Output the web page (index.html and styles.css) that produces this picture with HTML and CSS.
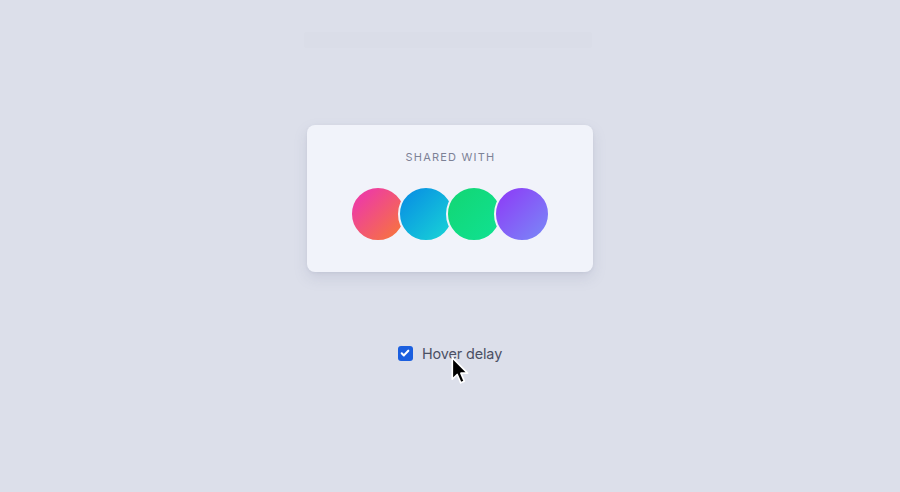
FILE: index.html
```html
<!DOCTYPE html>
<html>
<head>
<meta charset="utf-8">
<link rel="stylesheet" href="styles.css">
</head>
<body>
<main class="page">
  <div class="ghost-bar"></div>
  <section class="card">
    <div class="card-title">SHARED WITH</div>
    <div class="avatars">
      <span class="avatar a-pink"></span>
      <span class="avatar a-blue"></span>
      <span class="avatar a-green"></span>
      <span class="avatar a-purple"></span>
    </div>
  </section>
  <label class="option">
    <span class="checkbox">
      <svg viewBox="0 0 16 16" width="12" height="12"><path d="M3.6 8.4l2.9 2.8 5.9-6.3" fill="none" stroke="#fff" stroke-width="2.8" stroke-linecap="round" stroke-linejoin="round"/></svg>
    </span>
    <span class="option-label">Hover delay</span>
  </label>
  <svg class="cursor" viewBox="0 0 14 22" width="18" height="29">
    <path d="M1 1 L1 17.8 L4.8 14.1 L7.6 20.6 L10.4 19.4 L7.7 13.1 L12.9 13.1 Z" fill="#000" stroke="#fff" stroke-width="1.3" stroke-linejoin="round"/>
  </svg>
</main>
</body>
</html>
```
FILE: styles.css
```css
html, body {
  margin: 0;
  padding: 0;
}
body {
  background: #dcdfea;
  font-family: Inter, "Noto Sans", sans-serif;
  width: 900px;
  height: 492px;
  overflow: hidden;
}
.page {
  position: relative;
  display: flex;
  flex-direction: column;
  align-items: center;
  padding-top: 32px;
  height: 460px;
}
.ghost-bar {
  width: 288px;
  height: 16px;
  margin-left: -4px;
  background: #dadde8;
  border-radius: 2px;
}
.card {
  margin-top: 77px;
  width: 286px;
  height: 147px;
  box-sizing: border-box;
  background: #f1f3fa;
  border-radius: 8px;
  box-shadow: 0 6px 14px rgba(120, 128, 160, 0.18), 0 1px 3px rgba(120, 128, 160, 0.12);
  display: flex;
  flex-direction: column;
  align-items: center;
  padding-top: 25px;
}
.card-title {
  font-size: 11px;
  line-height: 14px;
  letter-spacing: 1.2px;
  color: #7d8296;
  margin-left: 1px;
}
.avatars {
  margin-top: 22px;
  display: flex;
}
.avatar {
  width: 56px;
  height: 56px;
  box-sizing: border-box;
  border-radius: 50%;
  border: 2px solid #f1f3fa;
}
.avatar + .avatar {
  margin-left: -8px;
}
.a-pink { background: linear-gradient(135deg, #ee3f9e 20%, #f66f47 85%); }
.a-blue { background: linear-gradient(135deg, #0a95e2 15%, #17cfd7 90%); }
.a-green { background: linear-gradient(135deg, #12d879 20%, #10e08e 85%); }
.a-purple { background: linear-gradient(135deg, #8b44f7 15%, #7b82f7 90%); }
.option {
  margin-top: 71px;
  display: flex;
  align-items: center;
  gap: 9px;
  height: 20px;
}
.checkbox {
  width: 15px;
  height: 15px;
  border-radius: 3px;
  background: #1b5fdf;
  display: flex;
  align-items: center;
  justify-content: center;
}
.option-label {
  font-size: 14.4px;
  letter-spacing: -0.1px;
  color: #4b5064;
}
.cursor {
  position: absolute;
  left: 451px;
  top: 356px;
}
```
